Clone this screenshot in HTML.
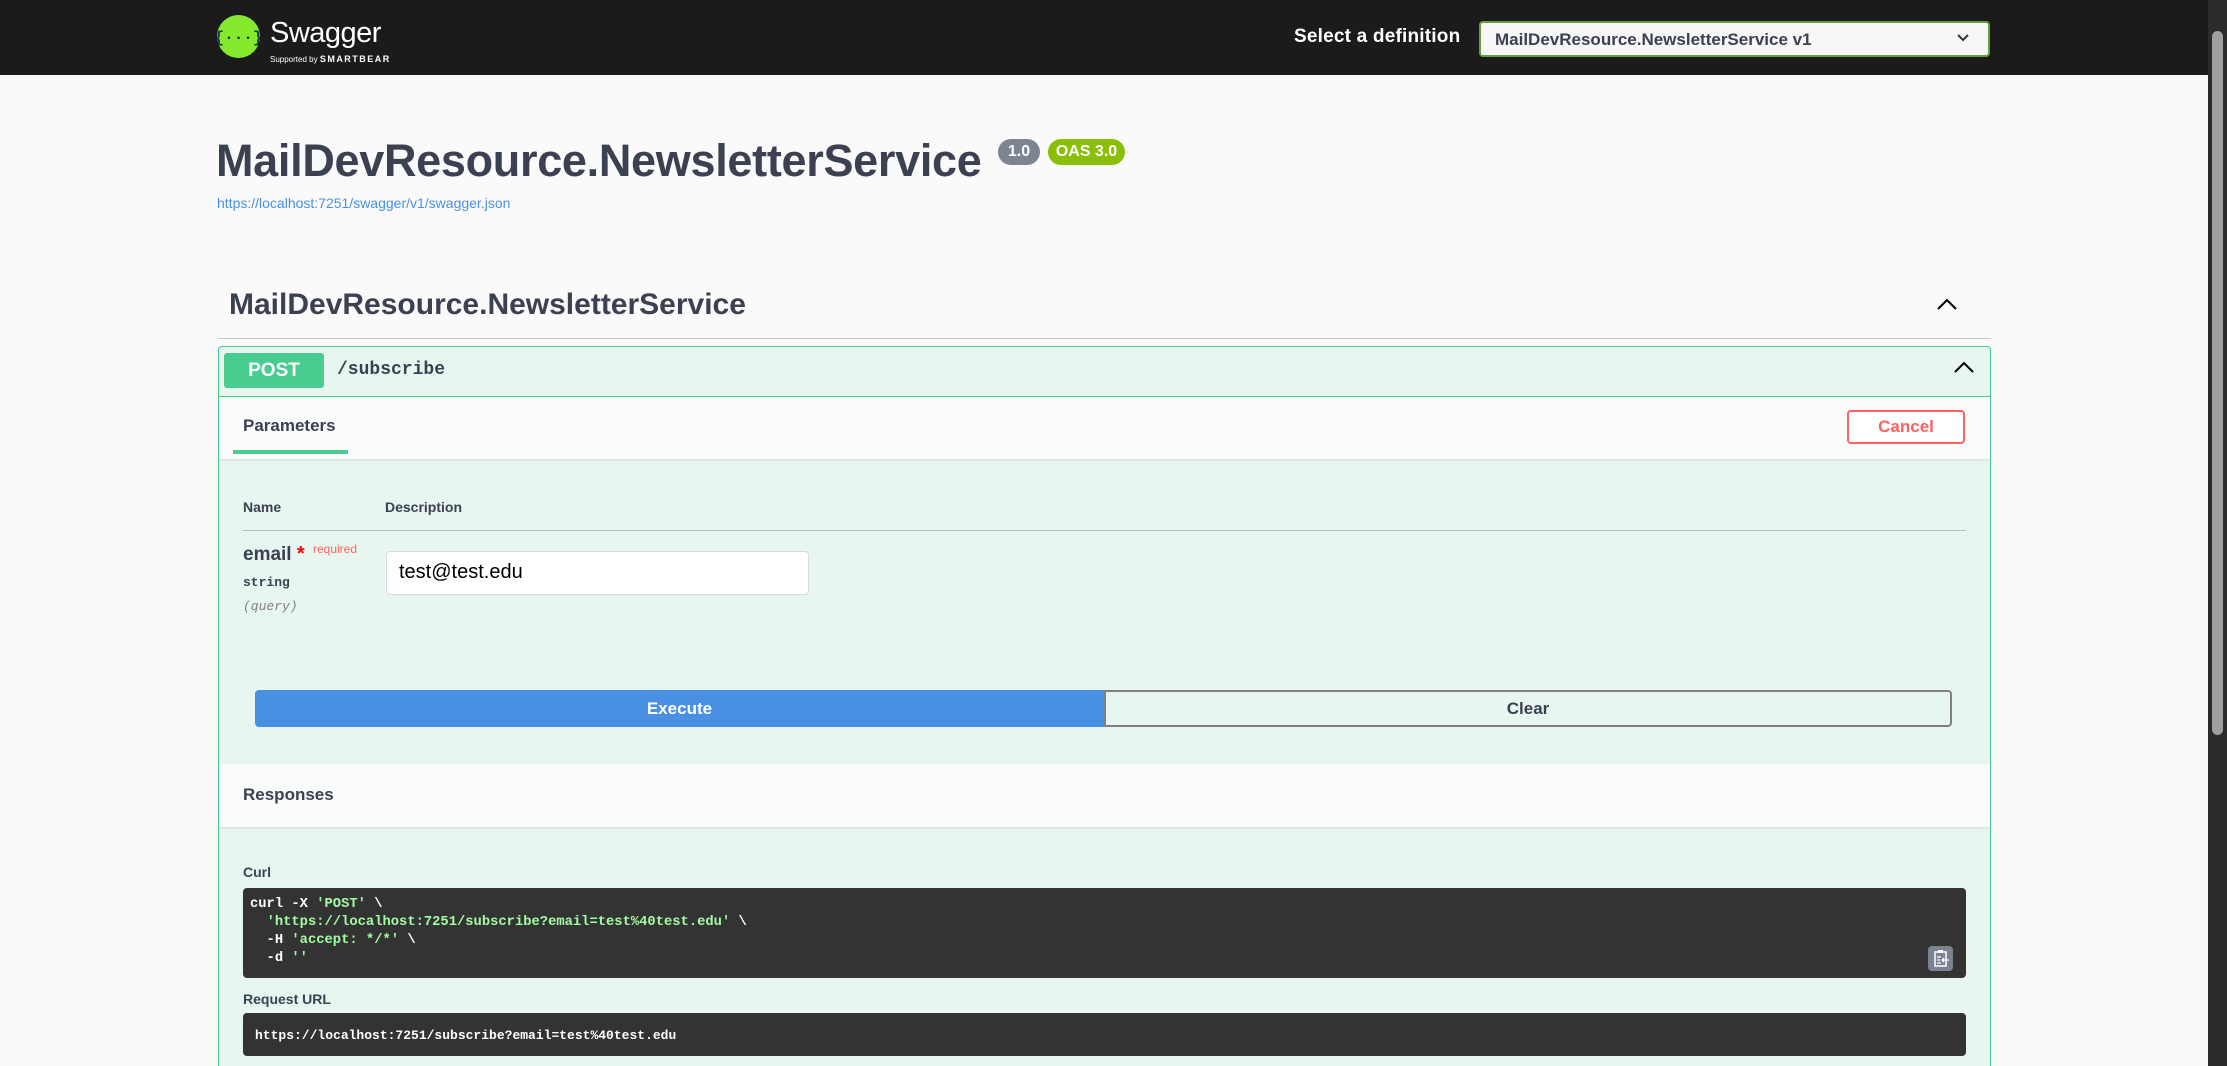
<!DOCTYPE html>
<html><head><meta charset="utf-8"><style>
*{margin:0;padding:0;box-sizing:border-box}
html,body{width:2227px;height:1066px;overflow:hidden}
body{background:#fafafa;font-family:"Liberation Sans",Arial,sans-serif;position:relative;color:#3b4151}
.a{position:absolute}
.mono{font-family:"Liberation Mono",monospace}
</style></head><body>
<div class="a" style="left:0;top:0;width:2208px;height:75px;background:#1b1b1b"></div>
<svg class="a" style="left:217px;top:15px" width="43" height="43" viewBox="0 0 43 43"><circle cx="21.5" cy="21.5" r="21.5" fill="#85ea2d"/><text x="21.5" y="27" text-anchor="middle" font-family="Liberation Mono,monospace" font-weight="bold" font-size="16" fill="#173647">{···}</text></svg>
<div class="a" style="left:270px;top:17px;font-size:29px;color:#fff;letter-spacing:-0.5px">Swagger</div>
<div class="a" style="left:270px;top:54px;font-size:8px;color:#fff">Supported by <b style="font-size:9px;letter-spacing:1.5px">SMARTBEAR</b></div>
<div class="a" style="left:1294px;top:26px;font-size:19px;font-weight:bold;color:#fff;letter-spacing:0.2px">Select a definition</div>
<div class="a" style="left:1479px;top:21px;width:511px;height:36px;border:2px solid #62a03f;border-radius:4px;background:#f7f7f7;font-size:17px;font-weight:bold;color:#3b4151;padding:7px 0 0 14px">MailDevResource.NewsletterService v1</div>
<svg class="a" style="left:1956px;top:33px" width="14" height="10"><path d="M2 2 L7 7 L12 2" stroke="#333" stroke-width="2" fill="none"/></svg>
<div class="a" style="left:2208px;top:0;width:19px;height:1066px;background:#2b2b2b"></div>
<div class="a" style="left:2212px;top:31px;width:11px;height:704px;background:#9f9f9f;border-radius:6px"></div>

<div class="a" style="left:216px;top:135px;font-size:45px;font-weight:bold;letter-spacing:-0.3px">MailDevResource.NewsletterService</div>
<div class="a" style="left:998px;top:139px;width:42px;height:26px;border-radius:13px;background:#7d8492;color:#fff;font-size:16px;font-weight:bold;text-align:center;line-height:26px">1.0</div>
<div class="a" style="left:1048px;top:139px;width:77px;height:26px;border-radius:13px;background:#89bf04;color:#fff;font-size:16px;font-weight:bold;text-align:center;line-height:26px">OAS 3.0</div>
<div class="a" style="left:217px;top:195px;font-size:14px;color:#4990e2">https://localhost:7251/swagger/v1/swagger.json</div>

<div class="a" style="left:229px;top:288px;font-size:30px;font-weight:bold">MailDevResource.NewsletterService</div>
<svg class="a" style="left:1936px;top:297px" width="22" height="14"><path d="M2 12 L11 3 L20 12" stroke="#000" stroke-width="2" fill="none"/></svg>
<div class="a" style="left:218px;top:338px;width:1773px;height:1px;background:#c8c8c8"></div>

<div class="a" style="left:218px;top:346px;width:1773px;height:760px;border:1px solid #49cc90;border-radius:4px;background:#e8f6f0"></div>
<div class="a" style="left:224px;top:353px;width:100px;height:35px;background:#49cc90;border-radius:3px;color:#fff;font-weight:bold;font-size:19px;text-align:center;line-height:35px">POST</div>
<div class="a mono" style="left:337px;top:360px;font-size:18px;font-weight:bold;color:#3b4151">/subscribe</div>
<svg class="a" style="left:1953px;top:360px" width="22" height="14"><path d="M2 12 L11 3 L20 12" stroke="#000" stroke-width="2" fill="none"/></svg>
<div class="a" style="left:219px;top:396px;width:1771px;height:1px;background:#49cc90"></div>
<div class="a" style="left:219px;top:397px;width:1771px;height:62px;background:#f9fcfa;box-shadow:0 1px 2px rgba(0,0,0,.1)"></div>
<div class="a" style="left:243px;top:416px;font-size:17px;font-weight:bold">Parameters</div>
<div class="a" style="left:233px;top:450px;width:115px;height:4px;background:#49cc90"></div>
<div class="a" style="left:1847px;top:410px;width:118px;height:34px;border:2px solid #ff6060;border-radius:4px;color:#ff6060;font-weight:bold;font-size:17px;text-align:center;line-height:30px;background:#fff">Cancel</div>

<div class="a" style="left:243px;top:499px;font-size:14px;font-weight:bold">Name</div>
<div class="a" style="left:385px;top:499px;font-size:14px;font-weight:bold">Description</div>
<div class="a" style="left:243px;top:530px;width:1723px;height:1px;background:rgba(59,65,81,.3)"></div>
<div class="a" style="left:243px;top:543px;font-size:19px;font-weight:bold">email <span style="color:#ff0000;font-size:20px">*</span></div>
<div class="a" style="left:313px;top:542px;font-size:12px;color:#ff6060">required</div>
<div class="a mono" style="left:243px;top:575px;font-size:13px;font-weight:bold">string</div>
<div class="a mono" style="left:243px;top:599px;font-size:13px;font-style:italic;color:#808080">(query)</div>
<div class="a" style="left:386px;top:551px;width:423px;height:44px;border:1px solid #d9d9d9;border-radius:4px;background:#fff;font-size:20px;color:#000;padding:9px 0 0 12px">test@test.edu</div>

<div class="a" style="left:255px;top:690px;width:849px;height:37px;background:#4990e2;border-radius:4px 0 0 4px;color:#fff;font-weight:bold;font-size:17px;text-align:center;line-height:37px">Execute</div>
<div class="a" style="left:1104px;top:690px;width:848px;height:37px;border:2px solid #808080;border-radius:0 4px 4px 0;color:#3b4151;font-weight:bold;font-size:17px;text-align:center;line-height:33px">Clear</div>

<div class="a" style="left:219px;top:764px;width:1771px;height:63px;background:#f9fcfa;box-shadow:0 1px 2px rgba(0,0,0,.1)"></div>
<div class="a" style="left:243px;top:785px;font-size:17px;font-weight:bold">Responses</div>

<div class="a" style="left:243px;top:864px;font-size:14px;font-weight:bold">Curl</div>
<div class="a" style="left:243px;top:888px;width:1723px;height:90px;background:#333;border-radius:4px"></div>
<pre class="a mono" style="left:250px;top:896px;font-size:13.8px;font-weight:bold;color:#fff;line-height:18px">curl -X <span style="color:#a2fca2">'POST'</span> \
  <span style="color:#a2fca2">'https://localhost:7251/subscribe?email=test%40test.edu'</span> \
  -H <span style="color:#a2fca2">'accept: */*'</span> \
  -d <span style="color:#a2fca2">''</span></pre>
<svg class="a" style="left:1928px;top:946px" width="25" height="25" viewBox="0 0 25 25"><rect width="25" height="25" rx="4" fill="#7d8293"/><path d="M7 6 H18 V20 H7 Z" stroke="#fff" stroke-width="1.5" fill="none"/><rect x="10" y="4" width="5" height="3" fill="#fff"/><path d="M9 11 H13 M9 14 H12 M9 17 H13 M21 14 H14 M16 12 L14 14 L16 16" stroke="#fff" stroke-width="1.3" fill="none"/></svg>

<div class="a" style="left:243px;top:991px;font-size:14px;font-weight:bold">Request URL</div>
<div class="a" style="left:243px;top:1013px;width:1723px;height:43px;background:#333;border-radius:4px"></div>
<div class="a mono" style="left:255px;top:1028px;font-size:13px;font-weight:bold;color:#fff">https://localhost:7251/subscribe?email=test%40test.edu</div>
</body></html>
